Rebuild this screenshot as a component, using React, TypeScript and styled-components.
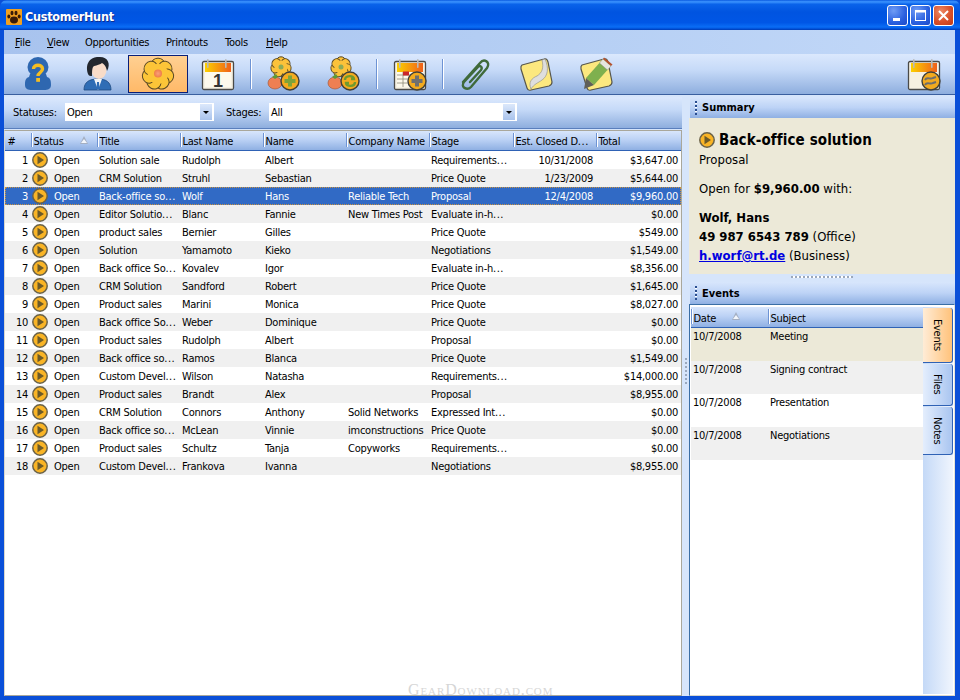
// App.tsx
import React from 'react';
import styled, { createGlobalStyle, css } from 'styled-components';

const GlobalStyle = createGlobalStyle`
  html, body {
    margin: 0;
    padding: 0;
    width: 960px;
    height: 700px;
    overflow: hidden;
    background: #0a4fd8;
  }
  * { box-sizing: border-box; }
`;

type Deal = [string, string, string, string, string, string, string];

const deals: Deal[] = [
  ['Solution sale', 'Rudolph', 'Albert', '', 'Requirements...', '10/31/2008', '$3,647.00'],
  ['CRM Solution', 'Struhl', 'Sebastian', '', 'Price Quote', '1/23/2009', '$5,644.00'],
  ['Back-office so...', 'Wolf', 'Hans', 'Reliable Tech', 'Proposal', '12/4/2008', '$9,960.00'],
  ['Editor Solutio...', 'Blanc', 'Fannie', 'New Times Post', 'Evaluate in-h...', '', '$0.00'],
  ['product sales', 'Bernier', 'Gilles', '', 'Price Quote', '', '$549.00'],
  ['Solution', 'Yamamoto', 'Kieko', '', 'Negotiations', '', '$1,549.00'],
  ['Back office So...', 'Kovalev', 'Igor', '', 'Evaluate in-h...', '', '$8,356.00'],
  ['CRM Solution', 'Sandford', 'Robert', '', 'Price Quote', '', '$1,645.00'],
  ['Product sales', 'Marini', 'Monica', '', 'Price Quote', '', '$8,027.00'],
  ['Back office So...', 'Weber', 'Dominique', '', 'Price Quote', '', '$0.00'],
  ['Product sales', 'Rudolph', 'Albert', '', 'Proposal', '', '$0.00'],
  ['Back office so...', 'Ramos', 'Blanca', '', 'Price Quote', '', '$1,549.00'],
  ['Custom Devel...', 'Wilson', 'Natasha', '', 'Requirements...', '', '$14,000.00'],
  ['Product sales', 'Brandt', 'Alex', '', 'Proposal', '', '$8,955.00'],
  ['CRM Solution', 'Connors', 'Anthony', 'Solid Networks', 'Expressed Int...', '', '$0.00'],
  ['Back office so...', 'McLean', 'Vinnie', 'imconstructions', 'Price Quote', '', '$0.00'],
  ['Product sales', 'Schultz', 'Tanja', 'Copyworks', 'Requirements...', '', '$0.00'],
  ['Custom Devel...', 'Frankova', 'Ivanna', '', 'Negotiations', '', '$8,955.00'],
];

const events = [
  ['10/7/2008', 'Meeting'],
  ['10/7/2008', 'Signing contract'],
  ['10/7/2008', 'Presentation'],
  ['10/7/2008', 'Negotiations'],
];

const uiFont = `"DejaVu Sans Condensed", "DejaVu Sans", "Noto Sans", sans-serif`;
const barGradient = 'linear-gradient(180deg, #dbe8fd 0%, #c6daf8 40%, #8eaede 100%)';

const Window = styled.div`
  position: relative;
  width: 960px;
  height: 700px;
  display: flex;
  flex-direction: column;
  background: #0a4fd8;
  font-family: ${uiFont};
  font-size: 11px;
  letter-spacing: -0.25px;
  color: #000;
  overflow: hidden;
`;

const TitleBar = styled.div`
  height: 30px;
  flex: none;
  display: flex;
  align-items: center;
  padding: 3px 6px 0 6px;
  background: linear-gradient(180deg, #0a5ae0 0%, #3d95ff 6%, #0a63ea 14%, #0054e0 40%, #0056e6 75%, #0a6df5 90%, #0050d8 96%, #0039b0 100%);
  border-radius: 7px 7px 0 0;
`;

const TitleText = styled.div`
  margin-left: 3px;
  flex: 1;
  color: #fff;
  font-size: 12.5px;
  font-weight: 700;
  text-shadow: 1px 1px 0 #0f2f8f;
`;

const CaptionButton = styled.div<{ $close?: boolean }>`
  width: 21px;
  height: 21px;
  margin-left: 2px;
  margin-top: -2px;
  border: 1px solid #fff;
  border-radius: 3px;
  display: flex;
  align-items: center;
  justify-content: center;
  background: ${p =>
    p.$close
      ? 'radial-gradient(circle at 35% 30%, #ee8a66 0%, #d9502a 55%, #c23a15 100%)'
      : 'radial-gradient(circle at 30% 25%, #6f9cf5 0%, #2a60df 60%, #1c4ac8 100%)'};
`;

const Body = styled.div`
  flex: 1;
  min-height: 0;
  margin: 0 5px 4px 4px;
  display: flex;
  flex-direction: column;
  background: #d6e5fb;
`;

const MenuBar = styled.div`
  height: 24px;
  flex: none;
  display: flex;
  align-items: center;
  padding-left: 11px;
  padding-top: 1px;
  background: linear-gradient(90deg, #a8c3ee 0%, #b3cdf3 50%, #c2d8f8 100%);
`;

const MenuItem = styled.div<{ $w: number }>`
  width: ${p => p.$w}px;
  flex: none;
  white-space: nowrap;
  u { text-decoration: underline; }
`;

const ToolBar = styled.div`
  height: 41px;
  flex: none;
  display: flex;
  align-items: flex-start;
  padding: 1px 1px 0 4px;
  background: ${barGradient};
  border-bottom: 1px solid #3a5f9f;
  border-radius: 4px 4px 0 0;
`;

const ToolButton = styled.div<{ $active?: boolean }>`
  width: 60px;
  height: 38px;
  flex: none;
  display: flex;
  align-items: center;
  justify-content: center;
  ${p =>
    p.$active &&
    css`
      border: 1px solid #0a1f78;
      background: linear-gradient(180deg, #ffd092 0%, #ffb968 100%);
    `}
`;

const ToolSep = styled.div`
  width: 2px;
  height: 30px;
  margin: 4px 2px 0 2px;
  flex: none;
  background: linear-gradient(90deg, #6d93d4 50%, #fff 50%);
`;

const Spacer = styled.div`
  flex: 1;
`;

const Main = styled.div`
  flex: 1;
  min-height: 0;
  display: flex;
`;

const LeftPane = styled.div`
  width: 678px;
  flex: none;
  display: flex;
  flex-direction: column;
`;

const FilterBar = styled.div`
  height: 32px;
  margin-top: 2px;
  flex: none;
  display: flex;
  align-items: center;
  padding: 0 0 1px 9px;
  background: ${barGradient};
  border-bottom: 1px solid #5a7fbd;
`;

const FilterLabel = styled.span<{ $w: number }>`
  width: ${p => p.$w}px;
  flex: none;
  white-space: nowrap;
`;

const Combo = styled.div<{ $w: number; $gap?: number }>`
  width: ${p => p.$w}px;
  margin-right: ${p => p.$gap ?? 0}px;
  height: 18px;
  flex: none;
  display: flex;
  align-items: center;
  padding-left: 2px;
  background: #fff;
  border-right: 1px solid #fff;
`;

const ComboText = styled.span`
  flex: 1;
`;

const ComboArrow = styled.span`
  width: 12px;
  height: 16px;
  margin-right: 1px;
  flex: none;
  display: flex;
  align-items: center;
  justify-content: center;
  background: linear-gradient(180deg, #dce8fb, #a9c3ec);
  &::after {
    content: '';
    border-style: solid;
    border-width: 3px 3px 0 3px;
    border-color: #000 transparent transparent transparent;
  }
`;

const GridFrame = styled.div`
  flex: 1;
  min-height: 0;
  margin-top: 1px;
  background: #fff;
  border-top: 1px solid #a9a79b;
  border-left: 1px solid #d9d7cc;
  border-right: 1px solid #a9a79b;
  border-bottom: 1px solid #a9a79b;
`;

const gridColumns = '26px 66px 83px 83px 83px 83px 84px 83px 1fr';

const HeaderRow = styled.div`
  height: 20px;
  display: grid;
  grid-template-columns: ${gridColumns};
  background: linear-gradient(180deg, #d8e6fc 0%, #bcd2f5 45%, #8fb0e3 100%);
  border-bottom: 1px solid #2f62b5;
`;

const HeaderCell = styled.div<{ $first?: boolean }>`
  position: relative;
  display: flex;
  align-items: center;
  padding: 2px 0 0 2.5px;
  white-space: nowrap;
  overflow: hidden;
  ${p =>
    !p.$first &&
    css`
      &::before {
        content: '';
        position: absolute;
        left: 0;
        top: 2px;
        bottom: 3px;
        width: 2px;
        background: linear-gradient(90deg, #6d93d4 50%, #fff 50%);
      }
    `}
`;

const SortMark = styled.span<{ $right: number }>`
  position: absolute;
  right: ${p => p.$right}px;
  top: 5px;
  width: 0;
  height: 0;
  border-style: solid;
  border-width: 0 4.5px 8px 4.5px;
  border-color: transparent transparent #a4afc2 transparent;
  &::after {
    content: '';
    position: absolute;
    left: -3px;
    top: 3px;
    border-style: solid;
    border-width: 0 3px 4px 3px;
    border-color: transparent transparent #f2f6fc transparent;
  }
`;

const Dots = styled.span`
  letter-spacing: 0.5px;
`;

const Row = styled.div<{ $alt: boolean; $selected: boolean }>`
  height: 18px;
  display: grid;
  grid-template-columns: ${gridColumns};
  align-items: center;
  background: ${p => (p.$selected ? '#316ac5' : p.$alt ? '#f0f0f0' : '#fff')};
  color: ${p => (p.$selected ? '#fff' : '#000')};
  outline: ${p => (p.$selected ? '1px dotted #c9923f' : 'none')};
  outline-offset: -1px;
`;

const Cell = styled.div<{ $right?: boolean }>`
  padding: 0 ${p => (p.$right ? 3 : 0)}px 0 ${p => (p.$right ? 0 : 2)}px;
  text-align: ${p => (p.$right ? 'right' : 'left')};
  white-space: nowrap;
  overflow: hidden;
`;

const StatusCell = styled.div`
  display: flex;
  align-items: center;
  padding-left: 1px;
  gap: 6px;
`;

const SplitterV = styled.div`
  width: 7px;
  flex: none;
  display: flex;
  align-items: center;
  justify-content: center;
  background: #d6e5fb;
`;

const GripV = styled.div`
  width: 2px;
  height: 26px;
  margin-top: -50px;
  background: repeating-linear-gradient(180deg, #9aa8bd 0 2px, transparent 2px 4px);
`;

const RightPane = styled.div`
  flex: 1;
  min-width: 0;
  display: flex;
  flex-direction: column;
  padding-top: 2px;
`;

const PanelHeader = styled.div<{ $h: number }>`
  height: ${p => p.$h}px;
  margin-left: 1px;
  flex: none;
  display: flex;
  align-items: center;
  gap: 5px;
  padding-left: 5px;
  background: linear-gradient(180deg, #d8e6fc 0%, #bdd3f6 50%, #8fb0e3 100%);
  border-radius: 3px 3px 0 0;
  font-weight: 700;
  letter-spacing: 0;
`;

const HeaderDots = styled.span`
  width: 2px;
  height: 14px;
  background: repeating-linear-gradient(180deg, #2a4d8f 0 2px, #fff 2px 3px, transparent 3px 4px);
`;

const SummaryBody = styled.div`
  height: 156px;
  flex: none;
  padding: 12px 9px 0 10px;
  background: #ece9d8;
  font-size: 13px;
  letter-spacing: 0;
  line-height: 19px;
`;

const SummaryTitle = styled.div`
  display: flex;
  align-items: center;
  gap: 4px;
  font-size: 15px;
  letter-spacing: 0.1px;
  font-weight: 700;
  line-height: 20px;
`;

const SummaryLine = styled.div<{ $gap?: number }>`
  margin-top: ${p => p.$gap ?? 0}px;
  white-space: nowrap;
`;

const MailLink = styled.a`
  color: #0000e0;
  font-weight: 700;
  text-decoration: underline;
`;

const SplitterH = styled.div`
  height: 8px;
  padding-bottom: 2px;
  flex: none;
  display: flex;
  align-items: center;
  justify-content: center;
`;

const GripH = styled.div`
  width: 62px;
  height: 2px;
  background: repeating-linear-gradient(90deg, #9aa8bd 0 2px, #fff 2px 4px);
`;

const EventsBox = styled.div`
  flex: 1;
  min-height: 0;
  display: flex;
  background: #fff;
  border: 1px solid #3a6ea5;
  border-bottom-color: #d9d7cc;
  border-right-color: #e6e4d8;
  padding: 2px 1px 1px 1px;
`;

const EventsList = styled.div`
  width: 232px;
  flex: none;
  display: flex;
  flex-direction: column;
`;

const EventHeader = styled.div`
  height: 21px;
  flex: none;
  display: grid;
  grid-template-columns: 77px 155px;
  background: linear-gradient(180deg, #d8e6fc 0%, #bcd2f5 45%, #8fb0e3 100%);
  border-bottom: 1px solid #2f62b5;
`;

const EventRow = styled.div<{ $tone: 'sel' | 'alt' | 'plain' }>`
  height: 33px;
  flex: none;
  display: grid;
  grid-template-columns: 77px 155px;
  padding-top: 2px;
  background: ${p => (p.$tone === 'sel' ? '#ece9d8' : p.$tone === 'alt' ? '#f0f0f0' : '#fff')};
`;

const EventCell = styled.div`
  padding-left: 2px;
  white-space: nowrap;
`;

const TabStrip = styled.div`
  flex: 1;
  display: flex;
  flex-direction: column;
  padding-top: 1px;
  background: linear-gradient(90deg, #c4d9f7 0%, #f0f5fd 100%);
`;

const SideTab = styled.div<{ $h: number; $active?: boolean }>`
  width: 30px;
  height: ${p => p.$h}px;
  flex: none;
  margin-bottom: 1px;
  display: flex;
  align-items: center;
  justify-content: center;
  writing-mode: vertical-rl;
  border-radius: 0 3px 3px 0;
  border-right: 1px solid #2f62b5;
  border-bottom: 1px solid #2f62b5;
  background: ${p =>
    p.$active
      ? 'linear-gradient(90deg, #ffecd6 0%, #ffc27a 100%)'
      : 'linear-gradient(90deg, #e4eefd 0%, #a9c5f0 100%)'};
`;

const Watermark = styled.div`
  position: absolute;
  left: 408px;
  bottom: 2px;
  font-family: "Liberation Serif", serif;
  font-variant: small-caps;
  font-size: 16px;
  letter-spacing: 0.9px;
  color: #d6d6d6;
  line-height: 16px;
`;

function clipped(text: string) {
  if (!text.endsWith('...')) return text;
  return (
    <>
      {text.slice(0, -3)}
      <Dots>...</Dots>
    </>
  );
}

function StatusIcon() {
  return (
    <svg width="16" height="16" viewBox="0 0 16 16">
      <circle cx="8" cy="8" r="7.2" fill="#f9b425" stroke="#6a6248" strokeWidth="1.5" />
      <path d="M5.5 3.8 L12 8 L5.5 12.2 Z" fill="#6b5a28" />
    </svg>
  );
}

// petals around a centre, used by several toolbar icons
function Flower({ cx, cy, r, fill = '#fbc23a' }: { cx: number; cy: number; r: number; fill?: string }) {
  const petals = [0, 51, 103, 154, 206, 257, 309];
  return (
    <g>
      {petals.map(a => (
        <ellipse
          key={a}
          cx={cx}
          cy={cy - r * 0.6}
          rx={r * 0.46}
          ry={r * 0.42}
          fill={fill}
          stroke="#5b4a25"
          strokeWidth="1"
          transform={`rotate(${a} ${cx} ${cy})`}
        />
      ))}
      <circle cx={cx} cy={cy} r={r * 0.66} fill={fill} />
    </g>
  );
}

function Badge({ cx, cy, children }: { cx: number; cy: number; children: React.ReactNode }) {
  return (
    <g>
      <circle cx={cx} cy={cy} r="9" fill="#f3ab1f" stroke="#3f3f3a" strokeWidth="1.4" />
      {children}
    </g>
  );
}

function Tomato({ cx, cy }: { cx: number; cy: number }) {
  return (
    <g>
      <ellipse cx={cx} cy={cy} rx="7" ry="6" fill="#ee7f52" stroke="#a65a3c" strokeWidth="0.7" />
      <path d={`M${cx - 3} ${cy - 6} L${cx} ${cy - 4} L${cx + 3} ${cy - 6} L${cx + 1} ${cy - 9} Z`} fill="#5f9a35" />
    </g>
  );
}

function CalendarBase({ blank }: { blank?: boolean }) {
  return (
    <g>
      <defs>
        <linearGradient id="calTop" x1="0" x2="1" y1="0" y2="0">
          <stop offset="0" stopColor="#fcd000" />
          <stop offset="1" stopColor="#f0601a" />
        </linearGradient>
      </defs>
      <rect x="2.5" y="5.5" width="31" height="28" rx="1.5" fill="#f6f1e2" stroke="#4a4a48" strokeWidth="1.3" />
      <rect x="5" y="7" width="26" height="9" fill="url(#calTop)" />
      {!blank && <rect x="5" y="16" width="26" height="15" fill="#fdf9ec" />}
      <rect x="7" y="3" width="1.6" height="9" rx="0.8" fill="#b9b9b9" />
      <rect x="25" y="3" width="1.6" height="9" rx="0.8" fill="#b9b9b9" />
    </g>
  );
}

function HelpIcon() {
  return (
    <svg width="36" height="36" viewBox="0 0 36 36">
      <ellipse cx="18" cy="11" rx="10.5" ry="10" fill="#2e67b0" />
      <path d="M10 18 L26 18 L27 21 C31 22 31 26 31 29 C31 33 28 34 24 34 L12 34 C8 34 5 33 5 29 C5 26 5 22 9 21 Z" fill="#2e67b0" />
      <path d="M13.5 13 C13.5 8 22.5 8 22.5 13 C22.5 16.5 18 16.5 18 20" fill="none" stroke="#f5bd21" strokeWidth="3.4" />
      <rect x="16.2" y="22" width="3.8" height="3.8" fill="#f5bd21" />
    </svg>
  );
}

function PersonIcon() {
  return (
    <svg width="36" height="36" viewBox="0 0 36 36">
      <path d="M4 34 C4 26 9 23 18 23 C26 23 31 26 31 34 Z" fill="#2f6db5" stroke="#1f4a80" strokeWidth="0.8" />
      <path d="M14 23 L18 34 L22 23 Z" fill="#f2f5f8" />
      <path d="M17 26 L19 26 L19.5 33 L16.5 33 Z" fill="#2f6db5" />
      <ellipse cx="19" cy="14" rx="7.5" ry="9" fill="#f9dcc8" />
      <path d="M8 18 C4 5 13 0 20 1 C28 1 31 8 27 15 C26 10 24 8 22 7 C18 10 14 9 13 11 C12 13 12 16 12 20 C10 20 9 20 8 18 Z" fill="#23272e" />
    </svg>
  );
}

function FlowerIcon() {
  return (
    <svg width="36" height="36" viewBox="0 0 36 36">
      <defs>
        <radialGradient id="flowerEye">
          <stop offset="0" stopColor="#f9a07a" />
          <stop offset="1" stopColor="#ef7d4a" />
        </radialGradient>
      </defs>
      <Flower cx={18} cy={18} r={15.5} fill="#fcc538" />
      <circle cx="18" cy="17.5" r="4" fill="url(#flowerEye)" />
    </svg>
  );
}

function CalendarIcon() {
  return (
    <svg width="36" height="36" viewBox="0 0 36 36">
      <CalendarBase />
      <text x="18" y="30.5" textAnchor="middle" fontFamily="Liberation Sans, sans-serif" fontWeight="700" fontSize="18" fill="#333">1</text>
    </svg>
  );
}

function AddOpportunityIcon() {
  return (
    <svg width="36" height="36" viewBox="0 0 36 36">
      <Flower cx={15} cy={11} r={10} />
      <circle cx="15" cy="11" r="2.5" fill="#8bab58" />
      <Tomato cx={9} cy={27} />
      <Badge cx={24} cy={25}>
        <path d="M18.5 23 H22 V19.5 H26 V23 H29.5 V27 H26 V30.5 H22 V27 H18.5 Z" fill="#7da33a" />
      </Badge>
    </svg>
  );
}

function ReopenIcon() {
  return (
    <svg width="36" height="36" viewBox="0 0 36 36">
      <Flower cx={15} cy={11} r={10} />
      <circle cx="15" cy="11" r="2.5" fill="#8bab58" />
      <Tomato cx={9} cy={27} />
      <Badge cx={24} cy={25}>
        <path d="M19 24 C19 19 28 19 28 23 L25 23 M29 26 C29 31 20 31 20 27 L23 27" fill="none" stroke="#6f9a2e" strokeWidth="2.4" />
      </Badge>
    </svg>
  );
}

function AddEventIcon() {
  return (
    <svg width="36" height="36" viewBox="0 0 36 36">
      <CalendarBase />
      <path d="M5 19 H18 M5 23 H18 M5 27 H18 M11 16 V31" stroke="#8e8a7a" strokeWidth="0.8" />
      <rect x="11" y="15.5" width="6" height="4" fill="#c9262c" />
      <Badge cx={25} cy={25}>
        <path d="M19.5 23 H23 V19.5 H27 V23 H30.5 V27 H27 V30.5 H23 V27 H19.5 Z" fill="#6f6f6f" />
      </Badge>
    </svg>
  );
}

function ClipIcon() {
  return (
    <svg width="36" height="36" viewBox="0 0 36 36">
      <path
        d="M5 26 L22 7 C26 2 33 6 29 12 L13 31 C9 35 2 31 6 26 L20 11 C22 9 25 11 23 14 L12 26"
        fill="none"
        stroke="#3f6a3a"
        strokeWidth="2.4"
        strokeLinecap="round"
      />
    </svg>
  );
}

function NoteIcon() {
  return (
    <svg width="36" height="36" viewBox="0 0 36 36">
      <path d="M4 9 L26 3 Q29 2 30 6 L34 26 Q34 29 31 30 L13 34 Q10 35 9 32 L3 13 Q2.5 10 4 9 Z" fill="#fce87f" stroke="#57564c" strokeWidth="1.2" />
      <path d="M27 3 C31 12 30 20 24 24 C20 27 16 28 13 33 C10 26 14 22 19 20 C24 17 26 12 24 4 Z" fill="#dedede" stroke="#8a8a8a" strokeWidth="0.6" />
    </svg>
  );
}

function NoteEditIcon() {
  return (
    <svg width="36" height="36" viewBox="0 0 36 36">
      <path d="M4 9 L26 3 Q29 2 30 6 L34 26 Q34 29 31 30 L13 34 Q10 35 9 32 L3 13 Q2.5 10 4 9 Z" fill="#fce87f" stroke="#57564c" strokeWidth="1.2" />
      <path d="M25 3 L33 10 L16 29 L8 22 Z" fill="#7fb04e" />
      <path d="M25 3 L33 10 L29.5 14 L21.5 7 Z" fill="#e6e6e0" stroke="#888" strokeWidth="0.4" />
      <path d="M26 1.5 L34.5 8.5 L33 10 L25 3 Z" fill="#b4522f" />
      <path d="M8 22 L16 29 L6 33 Z" fill="#5f5f5a" />
    </svg>
  );
}

function CalendarSyncIcon() {
  return (
    <svg width="36" height="36" viewBox="0 0 36 36">
      <CalendarBase blank />
      <Badge cx={25} cy={25}>
        <path d="M19 24 C21 20 24 24 27 22 L30 21 M19 29 C21 25 24 29 27 27 L30 26" fill="none" stroke="#6d6d6d" strokeWidth="2" />
      </Badge>
    </svg>
  );
}

function PawIcon() {
  return (
    <svg width="16" height="16" viewBox="0 0 16 16">
      <rect width="16" height="16" rx="1" fill="#f0a020" />
      <ellipse cx="8" cy="11" rx="4" ry="3.4" fill="#3a1c08" />
      <ellipse cx="2.8" cy="7.6" rx="1.5" ry="2" fill="#3a1c08" />
      <ellipse cx="13.2" cy="7.6" rx="1.5" ry="2" fill="#3a1c08" />
      <ellipse cx="6" cy="4" rx="1.5" ry="2.2" fill="#3a1c08" />
      <ellipse cx="10" cy="4" rx="1.5" ry="2.2" fill="#3a1c08" />
    </svg>
  );
}

const columns = ['Title', 'Last Name', 'Name', 'Company Name', 'Stage', 'Est. Closed D...', 'Total'];

export default function App() {
  return (
    <Window>
      <GlobalStyle />
      <TitleBar>
        <PawIcon />
        <TitleText>CustomerHunt</TitleText>
        <CaptionButton>
          <svg width="13" height="13" viewBox="0 0 13 13"><rect x="2" y="9" width="7" height="3" fill="#fff" /></svg>
        </CaptionButton>
        <CaptionButton>
          <svg width="13" height="13" viewBox="0 0 13 13"><rect x="1.5" y="1.5" width="10" height="10" fill="none" stroke="#fff" /><rect x="1" y="1" width="11" height="2.5" fill="#fff" /></svg>
        </CaptionButton>
        <CaptionButton $close>
          <svg width="13" height="13" viewBox="0 0 13 13"><path d="M2 2 L11 11 M11 2 L2 11" stroke="#fff" strokeWidth="2" /></svg>
        </CaptionButton>
      </TitleBar>
      <Body>
        <MenuBar>
          <MenuItem $w={32}><u>F</u>ile</MenuItem>
          <MenuItem $w={38}><u>V</u>iew</MenuItem>
          <MenuItem $w={81}>Opportunities</MenuItem>
          <MenuItem $w={59}>Printouts</MenuItem>
          <MenuItem $w={41}>Tools</MenuItem>
          <MenuItem $w={40}><u>H</u>elp</MenuItem>
        </MenuBar>
        <ToolBar>
          <ToolButton><HelpIcon /></ToolButton>
          <ToolButton><PersonIcon /></ToolButton>
          <ToolButton $active><FlowerIcon /></ToolButton>
          <ToolButton><CalendarIcon /></ToolButton>
          <ToolSep />
          <ToolButton><AddOpportunityIcon /></ToolButton>
          <ToolButton><ReopenIcon /></ToolButton>
          <ToolSep />
          <ToolButton><AddEventIcon /></ToolButton>
          <ToolSep />
          <ToolButton><ClipIcon /></ToolButton>
          <ToolButton><NoteIcon /></ToolButton>
          <ToolButton><NoteEditIcon /></ToolButton>
          <Spacer />
          <ToolButton><CalendarSyncIcon /></ToolButton>
        </ToolBar>
        <Main>
          <LeftPane>
            <FilterBar>
              <FilterLabel $w={52}>Statuses:</FilterLabel>
              <Combo $w={149} $gap={12}>
                <ComboText>Open</ComboText>
                <ComboArrow />
              </Combo>
              <FilterLabel $w={43}>Stages:</FilterLabel>
              <Combo $w={248}>
                <ComboText>All</ComboText>
                <ComboArrow />
              </Combo>
            </FilterBar>
            <GridFrame>
              <HeaderRow>
                <HeaderCell $first>#</HeaderCell>
                <HeaderCell>Status<SortMark $right={9} /></HeaderCell>
                {columns.map(c => (
                  <HeaderCell key={c}><span>{clipped(c)}</span></HeaderCell>
                ))}
              </HeaderRow>
              {deals.map((d, i) => (
                <Row key={i} $alt={i % 2 === 1} $selected={i === 2}>
                  <Cell $right>{i + 1}</Cell>
                  <StatusCell><StatusIcon />Open</StatusCell>
                  <Cell>{clipped(d[0])}</Cell>
                  <Cell>{d[1]}</Cell>
                  <Cell>{d[2]}</Cell>
                  <Cell>{d[3]}</Cell>
                  <Cell>{clipped(d[4])}</Cell>
                  <Cell $right>{d[5]}</Cell>
                  <Cell $right>{d[6]}</Cell>
                </Row>
              ))}
            </GridFrame>
          </LeftPane>
          <SplitterV><GripV /></SplitterV>
          <RightPane>
            <PanelHeader $h={21}><HeaderDots />Summary</PanelHeader>
            <SummaryBody>
              <SummaryTitle><StatusIcon />Back-office solution</SummaryTitle>
              <SummaryLine>Proposal</SummaryLine>
              <SummaryLine $gap={10}>Open for <b>$9,960.00</b> with:</SummaryLine>
              <SummaryLine $gap={10}><b>Wolf, Hans</b></SummaryLine>
              <SummaryLine><b>49 987 6543 789</b> (Office)</SummaryLine>
              <SummaryLine><MailLink href="#">h.worf@rt.de</MailLink> (Business)</SummaryLine>
            </SummaryBody>
            <SplitterH><GripH /></SplitterH>
            <PanelHeader $h={22}><HeaderDots />Events</PanelHeader>
            <EventsBox>
              <EventsList>
                <EventHeader>
                  <HeaderCell>Date<SortMark $right={28} /></HeaderCell>
                  <HeaderCell>Subject</HeaderCell>
                </EventHeader>
                {events.map((e, i) => (
                  <EventRow key={i} $tone={i === 0 ? 'sel' : i % 2 === 1 ? 'alt' : 'plain'}>
                    <EventCell>{e[0]}</EventCell>
                    <EventCell>{e[1]}</EventCell>
                  </EventRow>
                ))}
              </EventsList>
              <TabStrip>
                <SideTab $h={55} $active>Events</SideTab>
                <SideTab $h={42}>Files</SideTab>
                <SideTab $h={48}>Notes</SideTab>
              </TabStrip>
            </EventsBox>
          </RightPane>
        </Main>
      </Body>
      <Watermark>GearDownload.com</Watermark>
    </Window>
  );
}
